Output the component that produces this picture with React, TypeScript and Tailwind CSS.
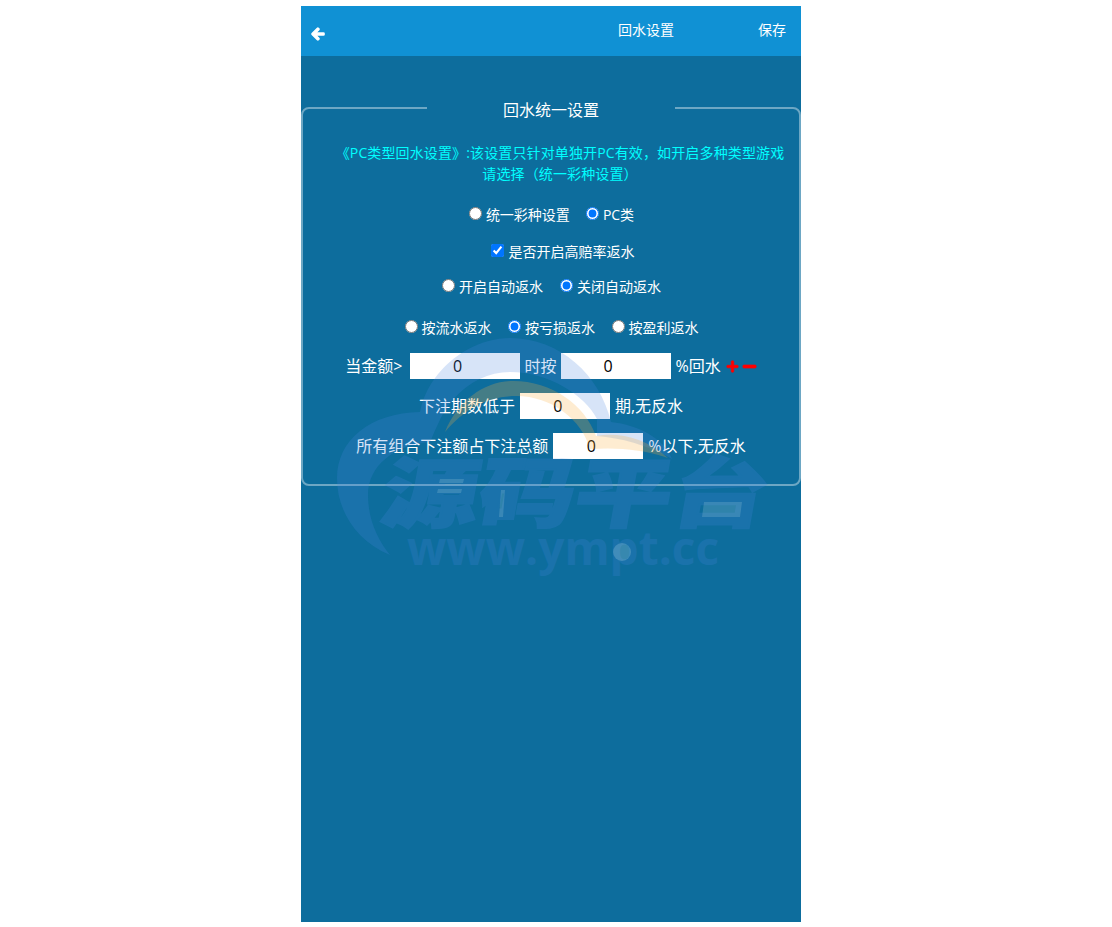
import { FaArrowLeft, FaMinus, FaPlus } from "react-icons/fa";

const Radio = ({ name, label, checked }: { name: string; label: string; checked?: boolean }) => (
  <label className="inline-flex items-center">
    <input type="radio" name={name} defaultChecked={checked} className="mr-[4px] -translate-y-[1px]" />
    <span>{label}</span>
  </label>
);

const Num = ({ size }: { size: string }) => (
  <input
    type="text"
    defaultValue="0"
    className={`${size} h-[26px] bg-white text-center text-[16px] text-black outline-none`}
  />
);

// faint logo that sits over the form, svg uses page coordinates
const Watermark = () => (
  <div className="pointer-events-none absolute inset-0 overflow-hidden">
    <svg viewBox="301 6 500 916" className="absolute inset-0 h-full w-full">
      <path
        d="M390 555 C355 540 337 510 337 478 C337 440 370 413 420 412 C428 370 470 338 510 338 C560 338 600 375 611 422 C640 425 665 440 672 459 C650 446 622 438 597 436 C597 428 597 424 597 419 C585 395 548 372 510 372 C480 372 452 392 438 424 C434 432 432 438 430 442 C395 445 368 465 368 495 C368 520 378 540 390 555 Z"
        fill="#4886e0"
        fillOpacity="0.22"
      />
      <path
        d="M445 432 C458 400 485 381 513 381 C552 381 585 405 596 436 C620 432 645 438 668 458 C645 450 620 447 590 449 C582 420 552 396 516 396 C490 396 465 408 445 432 Z"
        fill="#fbb040"
        fillOpacity="0.24"
      />
    </svg>
    <div
      className="absolute left-[83px] top-[437px] origin-left -skew-x-[8deg] scale-x-[1.27] whitespace-nowrap text-[76px] leading-[90px] font-black text-[#4886e0] opacity-[0.22] [-webkit-text-stroke:2px_#4886e0]"
      style={{ fontFamily: '"Noto Sans CJK SC", sans-serif' }}
    >
      源码平台
    </div>
    <div
      className="absolute left-[106px] top-[511px] whitespace-nowrap text-[46px] leading-[60px] font-bold text-[#4886e0] opacity-[0.22]"
      style={{ fontFamily: '"Open Sans", sans-serif' }}
    >
      www.ympt.cc
    </div>
    <svg viewBox="301 6 500 916" className="absolute inset-0 h-full w-full">
      <circle cx="622" cy="552" r="9" fill="#b8dce8" fillOpacity="0.25" />
      <path d="M704 502 H742 L740 517 H702 Z" fill="#b8dce8" fillOpacity="0.2" />
      <path d="M440 479 H464 L463 483 H439 Z M438 489 H462 L461 493 H437 Z" fill="#b8dce8" fillOpacity="0.2" />
      <path d="M501 490 H505 L503 517 H499 Z" fill="#b8dce8" fillOpacity="0.2" />
    </svg>
  </div>
);

export default function App() {
  return (
    <div
      className="relative ml-[301px] mt-[6px] h-[916px] w-[500px] bg-[#0d6d9d] text-white"
      style={{ fontFamily: '"Open Sans", "Noto Sans CJK SC", sans-serif' }}
    >
      <header className="flex h-[50px] items-center bg-[#1091d4] text-[14px]">
        <FaArrowLeft className="ml-[10px] mt-[5px] text-[14px]" stroke="currentColor" strokeWidth={50} />
        <span className="ml-[293px] -translate-y-[2px]">回水设置</span>
        <span className="ml-auto mr-[15px] -translate-y-[2px]">保存</span>
      </header>

      <fieldset className="mt-[40px] h-[390px] rounded-[8px] border-2 border-white/40">
        <legend className="mx-auto w-[248px] text-center text-[16px] leading-[24px]">
          <span className="relative top-[2px]">回水统一设置</span>
        </legend>

        <p className="mt-[22px] pl-[31px] pr-[13px] text-center text-[14px] leading-[21px] tracking-[0.13px] text-[#0ff]">
          《PC类型回水设置》:该设置只针对单独开PC有效，如开启多种类型游戏
          <br />
          请选择（统一彩种设置）
        </p>

        <div className="mt-[18px] flex h-[24px] items-center justify-center gap-[16px] pl-[1px] text-[14px]">
          <Radio name="scope" label="统一彩种设置" />
          <Radio name="scope" label="PC类" checked />
        </div>

        <div className="mt-[13px] flex h-[24px] items-center justify-center pl-[23px] text-[14px]">
          <label className="inline-flex items-center">
            <input type="checkbox" defaultChecked className="mr-[5px] -translate-y-[1px]" />
            <span>是否开启高赔率返水</span>
          </label>
        </div>

        <div className="mt-[11px] flex h-[24px] items-center justify-center gap-[17px] pl-[1px] text-[14px]">
          <Radio name="auto" label="开启自动返水" />
          <Radio name="auto" label="关闭自动返水" checked />
        </div>

        <div className="mt-[17px] flex h-[24px] items-center justify-center gap-[16.5px] pl-[1px] text-[14px]">
          <Radio name="mode" label="按流水返水" />
          <Radio name="mode" label="按亏损返水" checked />
          <Radio name="mode" label="按盈利返水" />
        </div>

        <div className="mt-[14px] flex h-[26px] items-center justify-center gap-[5px] text-[16px]">
          <span className="mr-[3px]">当金额&gt;</span>
          <Num size="w-[110px] pr-[16px]" />
          <span className="-ml-[1px]">时按</span>
          <Num size="w-[110px] pr-[17px]" />
          <span className="-ml-[1px]">%回水</span>
          <FaPlus className="text-[13px] text-[#f00]" stroke="currentColor" strokeWidth={30} />
          <FaMinus className="-ml-[2px] text-[15px] text-[#f00]" stroke="currentColor" strokeWidth={30} />
        </div>

        <div className="mt-[14px] flex h-[26px] items-center justify-center gap-[5px] text-[16px]">
          <span>下注期数低于</span>
          <Num size="w-[90px] pr-[14px]" />
          <span>期,无反水</span>
        </div>

        <div className="mt-[14px] flex h-[26px] items-center justify-center gap-[5px] text-[16px]">
          <span>所有组合下注额占下注总额</span>
          <Num size="w-[90px] pr-[14px]" />
          <span>%以下,无反水</span>
        </div>
      </fieldset>

      <Watermark />
    </div>
  );
}
